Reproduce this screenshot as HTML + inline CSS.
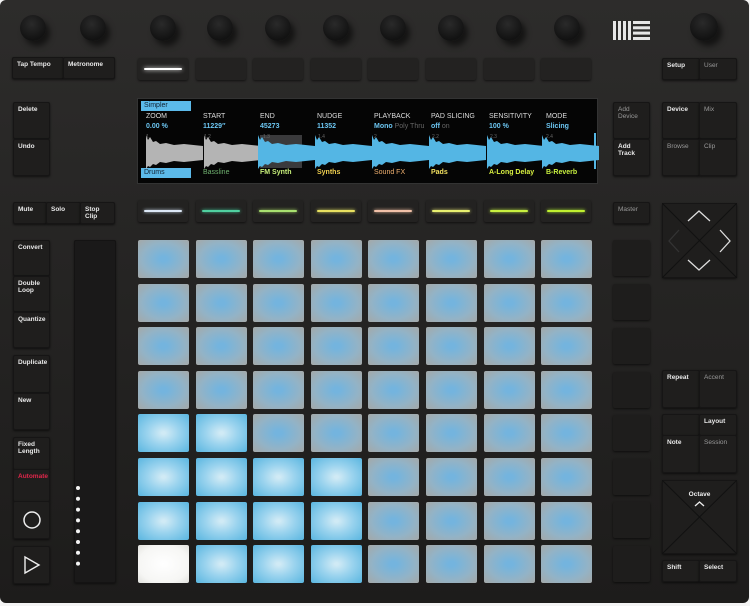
<!DOCTYPE html>
<html><head><meta charset="utf-8"><style>
*{margin:0;padding:0;box-sizing:border-box}
body{width:750px;height:606px;overflow:hidden;background:#f4f4f4;font-family:"Liberation Sans",sans-serif}
#dev{position:absolute;left:0;top:0;width:749px;height:603px;border-radius:6px;background:linear-gradient(#2d2c2b,#262524 40%,#1d1c1b);overflow:hidden}
.a{position:absolute}
.k{position:absolute;width:26px;height:26px;border-radius:50%;background:radial-gradient(circle at 45% 35%,#2a2a2a,#121212 70%);box-shadow:4px 5px 6px rgba(0,0,0,.55)}
.b{position:absolute;background:#1f1e1d;border-radius:2px;box-shadow:0 1px 2px rgba(0,0,0,.6),inset 0 0 0 1px #161515;color:#e8e8e8;font-size:6.5px;font-weight:bold;padding:4px 5px;line-height:7px}
.b.d{color:#999;font-weight:normal}
.sel{position:absolute;width:50px;height:22px;background:#232221;border-radius:2px;box-shadow:0 1px 2px rgba(0,0,0,.6)}
.sel i{position:absolute;left:6px;right:6px;top:10px;height:2px;border-radius:1px}
#pads{position:absolute;left:138px;top:240px;display:grid;grid-template-columns:repeat(8,51px);grid-template-rows:repeat(8,38px);column-gap:6.6px;row-gap:5.6px}
#pads div{border-radius:2px;background:radial-gradient(ellipse at 50% 50%,#74b4de 10%,#93b3c6 60%,#a4a8a8 100%)}
#pads .l{background:radial-gradient(ellipse at 50% 50%,#d0eaf5 5%,#9ad3ee 45%,#5ab6e0 100%)}
#pads .w{background:radial-gradient(#fff,#f6f6f4 70%,#e2e2de)}
.sc{position:absolute;left:613px;width:37px;height:36px;background:#1e1d1c;border-radius:2px;box-shadow:0 1px 2px rgba(0,0,0,.6)}
#scr{position:absolute;left:137px;top:98px;width:461px;height:86px;background:#050505;border:1px solid #333}
.t{position:absolute;font-size:7px;color:#ddd;white-space:nowrap}
.v{position:absolute;font-size:7px;color:#6cc6f2;font-weight:bold;white-space:nowrap}
.bl{position:absolute;top:70px;font-size:7px;font-weight:bold;white-space:nowrap}
</style></head><body><div id="dev">
<div class="k" style="left:20px;top:15px"></div>
<div class="k" style="left:80px;top:15px"></div>
<div class="k" style="left:150px;top:15px"></div>
<div class="k" style="left:207px;top:15px"></div>
<div class="k" style="left:265px;top:15px"></div>
<div class="k" style="left:323px;top:15px"></div>
<div class="k" style="left:380px;top:15px"></div>
<div class="k" style="left:438px;top:15px"></div>
<div class="k" style="left:496px;top:15px"></div>
<div class="k" style="left:554px;top:15px"></div>
<div class="k" style="left:690px;top:13px;width:28px;height:28px"></div>
<svg class="a" style="left:613px;top:21px" width="38" height="20"><g fill="#e6e6e6"><rect x="0" y="0" width="3" height="19"/><rect x="5" y="0" width="3" height="19"/><rect x="10" y="0" width="3" height="19"/><rect x="15" y="0" width="3" height="19"/><rect x="20" y="0" width="17" height="3"/><rect x="20" y="5.3" width="17" height="3"/><rect x="20" y="10.6" width="17" height="3"/><rect x="20" y="16" width="17" height="3"/></g></svg>
<div class="b" style="left:12px;top:57px;width:52px;height:22px">Tap Tempo</div>
<div class="b" style="left:63px;top:57px;width:52px;height:22px">Metronome</div>
<div class="sel" style="left:138px;top:58px"><i style="background:#fff;box-shadow:0 0 4px #fff"></i></div>
<div class="sel" style="left:196px;top:58px"></div>
<div class="sel" style="left:253px;top:58px"></div>
<div class="sel" style="left:311px;top:58px"></div>
<div class="sel" style="left:368px;top:58px"></div>
<div class="sel" style="left:426px;top:58px"></div>
<div class="sel" style="left:484px;top:58px"></div>
<div class="sel" style="left:541px;top:58px"></div>
<div class="b" style="left:662px;top:58px;width:38px;height:22px">Setup</div>
<div class="b d" style="left:699px;top:58px;width:38px;height:22px">User</div>
<div class="b" style="left:13px;top:102px;width:37px;height:37px">Delete</div>
<div class="b" style="left:13px;top:139px;width:37px;height:37px">Undo</div>
<div class="b" style="left:13px;top:202px;width:34px;height:22px">Mute</div>
<div class="b" style="left:46px;top:202px;width:35px;height:22px">Solo</div>
<div class="b" style="left:80px;top:202px;width:35px;height:22px">Stop<br>Clip</div>
<div class="b" style="left:13px;top:240px;width:37px;height:36px">Convert</div>
<div class="b" style="left:13px;top:276px;width:37px;height:36px">Double<br>Loop</div>
<div class="b" style="left:13px;top:312px;width:37px;height:36px">Quantize</div>
<div class="b" style="left:13px;top:355px;width:37px;height:38px">Duplicate</div>
<div class="b" style="left:13px;top:393px;width:37px;height:37px">New</div>
<div class="b" style="left:13px;top:437px;width:37px;height:33px">Fixed<br>Length</div>
<div class="b" style="left:13px;top:469px;width:37px;height:33px;color:#e0264a">Automate</div>
<div class="b" style="left:13px;top:501px;width:37px;height:38px"></div>
<svg class="a" style="left:22px;top:510px" width="20" height="20"><circle cx="10" cy="10" r="8" fill="none" stroke="#eee" stroke-width="1.5"/></svg>
<div class="b" style="left:13px;top:546px;width:37px;height:38px"></div>
<svg class="a" style="left:23px;top:555px" width="18" height="20"><path d="M2 2 L16 10 L2 18 Z" fill="none" stroke="#eee" stroke-width="1.4"/></svg>
<div class="a" style="left:74px;top:240px;width:42px;height:343px;background:#1a1919;border-radius:2px;box-shadow:inset 0 0 0 1px #141313,0 1px 2px rgba(0,0,0,.5)"></div>
<svg class="a" style="left:74px;top:484px" width="10" height="85"><g fill="#f4f4f4"><circle cx="4" cy="4" r="2"/><circle cx="4" cy="14.8" r="2"/><circle cx="4" cy="25.6" r="2"/><circle cx="4" cy="36.4" r="2"/><circle cx="4" cy="47.2" r="2"/><circle cx="4" cy="58" r="2"/><circle cx="4" cy="68.8" r="2"/><circle cx="4" cy="79.6" r="2"/></g></svg>
<div id="scr">
<div class="a" style="left:3px;top:2px;width:50px;height:10px;background:#5cbaea;color:#123;font-size:7px;padding:1px 3px">Simpler</div>
<div class="a" style="left:3px;top:69px;width:50px;height:10px;background:#5cbaea;color:#123;font-size:7px;padding:1px 3px">Drums</div>
<div class="t" style="left:8px;top:14px">ZOOM</div><div class="v" style="left:8px;top:24px">0.00 %</div>
<div class="t" style="left:65px;top:14px">START</div><div class="v" style="left:65px;top:24px">11229″</div>
<div class="t" style="left:122px;top:14px">END</div><div class="v" style="left:122px;top:24px">45273</div>
<div class="t" style="left:179px;top:14px">NUDGE</div><div class="v" style="left:179px;top:24px">11352</div>
<div class="t" style="left:236px;top:14px">PLAYBACK</div><div class="v" style="left:236px;top:24px">Mono <span style="color:#666;font-weight:normal">Poly Thru</span></div>
<div class="t" style="left:293px;top:14px">PAD SLICING</div><div class="v" style="left:293px;top:24px">off <span style="color:#666;font-weight:normal">on</span></div>
<div class="t" style="left:351px;top:14px">SENSITIVITY</div><div class="v" style="left:351px;top:24px">100 %</div>
<div class="t" style="left:408px;top:14px">MODE</div><div class="v" style="left:408px;top:24px">Slicing</div>
<svg class="a" style="left:0;top:34px" width="461" height="36">
<defs><path id="sg" d="M0 36 L0 2 L2 7 L4 4 L7 9 L10 8 L14 11 L20 10 L28 12 L38 11 L57 13 L57 27 L38 29 L28 28 L20 30 L14 29 L10 32 L7 31 L4 34 L2 33 Z"/></defs>
<rect x="122" y="2" width="42" height="33" fill="#3a3a3c"/>
<g fill="#b4b4b4"><use href="#sg" x="8"/><use href="#sg" x="66"/></g>
<g fill="#54b6e4"><use href="#sg" x="120"/><use href="#sg" x="177"/><use href="#sg" x="234"/><use href="#sg" x="291"/><use href="#sg" x="349"/><use href="#sg" x="404"/><rect x="456" y="0" width="2" height="36"/></g>
<g fill="#666" font-size="5" font-family="Liberation Sans"><text x="8" y="5">1</text><text x="66" y="5">1.2</text><text x="125" y="5">1.3</text><text x="180" y="5">1.4</text><text x="236" y="5">2</text><text x="294" y="5">2.2</text><text x="352" y="5">2.3</text><text x="408" y="5">2.4</text></g>
</svg>
<div class="bl" style="left:65px;color:#6fb06f;font-weight:normal">Bassline</div>
<div class="bl" style="left:122px;color:#c8f07a">FM Synth</div>
<div class="bl" style="left:179px;color:#f0d050">Synths</div>
<div class="bl" style="left:236px;color:#f0b070;font-weight:normal">Sound FX</div>
<div class="bl" style="left:293px;color:#f2e060">Pads</div>
<div class="bl" style="left:351px;color:#d8f040">A-Long Delay</div>
<div class="bl" style="left:408px;color:#c8f040">B-Reverb</div>
</div>
<div class="sel" style="left:138px;top:200px"><i style="background:#dce8f6;box-shadow:0 0 3px #cde"></i></div>
<div class="sel" style="left:196px;top:200px"><i style="background:#50d0a0;box-shadow:0 0 3px #4c9"></i></div>
<div class="sel" style="left:253px;top:200px"><i style="background:#a8e070;box-shadow:0 0 3px #ad6"></i></div>
<div class="sel" style="left:311px;top:200px"><i style="background:#e8e060;box-shadow:0 0 3px #ee6"></i></div>
<div class="sel" style="left:368px;top:200px"><i style="background:#f0c0a8;box-shadow:0 0 3px #fca"></i></div>
<div class="sel" style="left:426px;top:200px"><i style="background:#e8f070;box-shadow:0 0 3px #ee7"></i></div>
<div class="sel" style="left:484px;top:200px"><i style="background:#c8f040;box-shadow:0 0 3px #cf4"></i></div>
<div class="sel" style="left:541px;top:200px"><i style="background:#c0f030;box-shadow:0 0 3px #bf3"></i></div>
<div id="pads">
<div></div><div></div><div></div><div></div><div></div><div></div><div></div><div></div>
<div></div><div></div><div></div><div></div><div></div><div></div><div></div><div></div>
<div></div><div></div><div></div><div></div><div></div><div></div><div></div><div></div>
<div></div><div></div><div></div><div></div><div></div><div></div><div></div><div></div>
<div class="l"></div><div class="l"></div><div></div><div></div><div></div><div></div><div></div><div></div>
<div class="l"></div><div class="l"></div><div class="l"></div><div class="l"></div><div></div><div></div><div></div><div></div>
<div class="l"></div><div class="l"></div><div class="l"></div><div class="l"></div><div></div><div></div><div></div><div></div>
<div class="w"></div><div class="l"></div><div class="l"></div><div class="l"></div><div></div><div></div><div></div><div></div>
</div>
<div class="b d" style="left:613px;top:102px;width:37px;height:37px">Add<br>Device</div>
<div class="b" style="left:613px;top:139px;width:37px;height:37px">Add<br>Track</div>
<div class="b" style="left:662px;top:102px;width:38px;height:37px">Device</div>
<div class="b d" style="left:699px;top:102px;width:38px;height:37px">Mix</div>
<div class="b d" style="left:662px;top:139px;width:38px;height:37px">Browse</div>
<div class="b d" style="left:699px;top:139px;width:38px;height:37px">Clip</div>
<div class="b d" style="left:613px;top:202px;width:37px;height:22px">Master</div>
<div class="b" style="left:662px;top:203px;width:75px;height:75px;padding:0"></div>
<svg class="a" style="left:662px;top:203px" width="75" height="75"><g stroke="#111" stroke-width="1"><line x1="0" y1="0" x2="75" y2="75"/><line x1="75" y1="0" x2="0" y2="75"/></g><g fill="none" stroke="#ddd" stroke-width="1.3"><path d="M26 18 L37 8 L48 18"/><path d="M58 27 L68 38 L58 49"/><path d="M26 57 L37 67 L48 57"/></g><path d="M17 27 L7 38 L17 49" fill="none" stroke="#333" stroke-width="1.3"/></svg>
<div class="sc" style="top:240px"></div><div class="sc" style="top:284px"></div><div class="sc" style="top:328px"></div><div class="sc" style="top:372px"></div><div class="sc" style="top:415px"></div><div class="sc" style="top:459px"></div><div class="sc" style="top:502px"></div><div class="sc" style="top:546px"></div>
<div class="b" style="left:662px;top:370px;width:38px;height:38px">Repeat</div>
<div class="b d" style="left:699px;top:370px;width:38px;height:38px">Accent</div>
<div class="b" style="left:662px;top:414px;width:38px;height:22px"></div>
<div class="b" style="left:699px;top:414px;width:38px;height:22px">Layout</div>
<div class="b" style="left:662px;top:435px;width:38px;height:38px">Note</div>
<div class="b d" style="left:699px;top:435px;width:38px;height:38px">Session</div>
<div class="b" style="left:662px;top:480px;width:75px;height:74px;padding:0"></div>
<svg class="a" style="left:662px;top:480px" width="75" height="74"><g stroke="#111"><line x1="0" y1="0" x2="75" y2="74"/><line x1="75" y1="0" x2="0" y2="74"/></g><text x="37.5" y="16" fill="#eee" font-size="6.5" font-weight="bold" text-anchor="middle" font-family="Liberation Sans">Octave</text><path d="M33 26 L37.5 22 L42 26" fill="none" stroke="#eee" stroke-width="1.3"/></svg>
<div class="b" style="left:662px;top:560px;width:38px;height:22px">Shift</div>
<div class="b" style="left:699px;top:560px;width:38px;height:22px">Select</div>
</div></body></html>
